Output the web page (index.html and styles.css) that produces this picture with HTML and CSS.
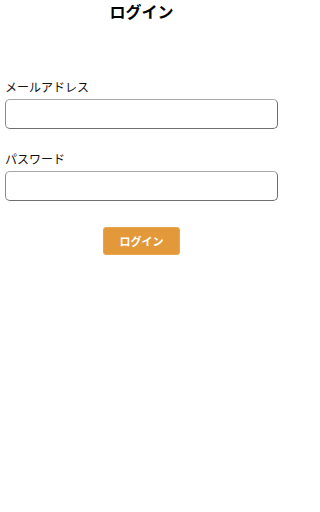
FILE: index.html
```html
<!DOCTYPE html>
<html lang="ja">
<head>
<meta charset="utf-8">
<link rel="stylesheet" href="styles.css">
</head>
<body>
<div class="page">
  <h1 class="title">ログイン</h1>
  <form class="form">
    <label class="label" for="email">メールアドレス</label>
    <input class="input" id="email" type="text">
    <label class="label label-second" for="pw">パスワード</label>
    <input class="input" id="pw" type="password">
    <div class="actions">
      <button class="btn" type="button">ログイン</button>
    </div>
  </form>
</div>
</body>
</html>
```
FILE: styles.css
```css
html, body {
  margin: 0;
  padding: 0;
  background: #fff;
}
body {
  font-family: "Noto Sans CJK JP", "Noto Sans", sans-serif;
  color: #111;
}
.page {
  margin-left: 5px;
  width: 273px;
}
.title {
  margin: 0;
  font-size: 16px;
  line-height: 23px;
  font-weight: 700;
  text-align: center;
  color: #000;
}
.form {
  display: flex;
  flex-direction: column;
  margin-top: 55px;
}
.label {
  display: block;
  font-size: 12px;
  line-height: 17px;
  margin-bottom: 4px;
}
.label-second {
  margin-top: 21px;
}
.input {
  box-sizing: border-box;
  width: 273px;
  height: 30px;
  margin: 0;
  border: 1px solid #6e6e6e;
  border-top-color: #a8a8a8;
  border-left-color: #8a8a8a;
  border-radius: 5px;
  background: #fff;
  outline: none;
}
.actions {
  display: flex;
  justify-content: center;
  margin-top: 26px;
}
.btn {
  box-sizing: border-box;
  width: 77px;
  height: 28px;
  border: 1px solid #e8a54f;
  border-radius: 3px;
  background: #e3983a;
  color: #fff;
  font-family: "Noto Sans CJK JP", "Noto Sans", sans-serif;
  font-size: 11px;
  font-weight: 700;
  padding: 0;
  line-height: 26px;
}
```
